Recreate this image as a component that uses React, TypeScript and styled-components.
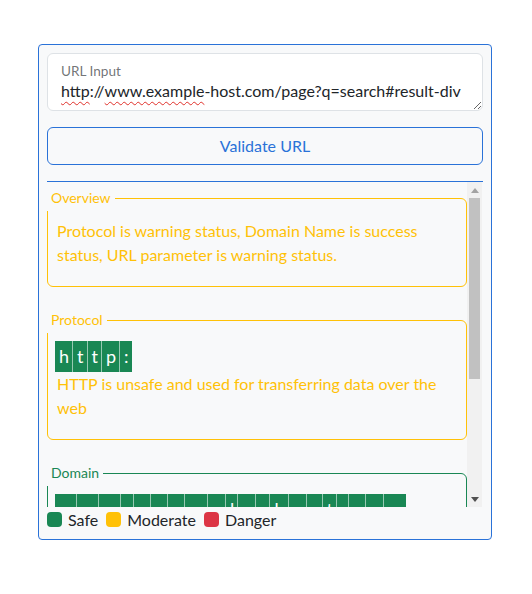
import React from "react";
import styled, { createGlobalStyle } from "styled-components";

const GlobalStyle = createGlobalStyle`
  html, body { margin: 0; padding: 0; background: #ffffff; }
  body {
    font-family: "Lato", "Noto Sans", sans-serif;
    color: #212529;
  }
  * { box-sizing: border-box; }
`;

const BLUE = "#2a72d8";
const GREEN = "#198754";
const YELLOW = "#ffc107";
const RED = "#dc3545";

type Tone = "success" | "warning" | "danger";
const toneColor = (t: Tone) => (t === "success" ? GREEN : t === "warning" ? YELLOW : RED);

const Page = styled.div`
  padding: 44px 0 40px 38px;
`;

const Card = styled.div`
  width: 454px;
  border: 1px solid ${BLUE};
  border-radius: 4px;
  background: #f8f9fa;
  padding: 8px;
  display: flex;
  flex-direction: column;
`;

const FloatingField = styled.div`
  position: relative;
  height: 58px;
  min-height: 58px;
  border: 1px solid #dee2e6;
  border-radius: 6px;
  background: #ffffff;
  resize: vertical;
  overflow: hidden;
  padding: 25px 12px 6px 13px;
`;

const FloatingLabel = styled.label`
  position: absolute;
  top: 8px;
  left: 13px;
  font-size: 13.6px;
  line-height: 18px;
  color: rgba(33, 37, 41, 0.65);
`;

const FieldValue = styled.div`
  font-size: 16px;
  line-height: 24px;
  color: #212529;
  white-space: nowrap;
`;

const Misspelled = styled.span`
  text-decoration: underline wavy #e0302a;
  text-decoration-thickness: 1px;
  text-underline-offset: 4px;
  text-decoration-skip-ink: none;
`;

const OutlineButton = styled.button`
  margin-top: 16px;
  height: 38px;
  border: 1px solid ${BLUE};
  border-radius: 6px;
  background: transparent;
  color: ${BLUE};
  font-family: inherit;
  font-size: 16px;
  line-height: 24px;
  padding: 6px 12px;
  cursor: pointer;
`;

const Divider = styled.div`
  margin-top: 16px;
  height: 1px;
  background: ${BLUE};
`;

const ScrollFrame = styled.div`
  display: flex;
  height: 325px;
`;

const ScrollContent = styled.div`
  flex: 1;
  min-width: 0;
  overflow-y: auto;
  scrollbar-width: none;
  padding: 16px 0 8px 0;
  display: flex;
  flex-direction: column;
  gap: 33px;
  &::-webkit-scrollbar {
    display: none;
  }
`;

const ScrollBar = styled.div`
  flex: none;
  width: 15px;
  margin-right: 1px;
  background: #f1f1f1;
  display: flex;
  flex-direction: column;
`;

const ScrollButton = styled.div`
  flex: none;
  height: 16px;
  display: flex;
  align-items: center;
  justify-content: center;
`;

const ScrollTrack = styled.div`
  flex: 1;
  padding: 0 2px;
`;

const ScrollThumb = styled.div`
  height: 181px;
  background: #c1c1c1;
`;

const Group = styled.div<{ $tone: Tone }>`
  position: relative;
  flex: none;
  border: 1px solid ${(p) => toneColor(p.$tone)};
  border-radius: 6px;
  padding: 20px 8px 19px 7px;
  color: ${(p) => toneColor(p.$tone)};
`;

const GroupLegend = styled.span`
  position: absolute;
  top: -14px;
  left: -1px;
  padding: 0 4px;
  font-size: 14px;
  line-height: 26px;
  background: #f8f9fa;
`;

const GroupText = styled.p`
  margin: 0;
  padding-left: 2px;
  font-size: 16px;
  line-height: 24px;
`;

const CharRow = styled.div`
  display: flex;
  flex-wrap: wrap;
`;

const CharBox = styled.span<{ $tone: Tone }>`
  background: ${(p) => toneColor(p.$tone)};
  color: #ffffff;
  font-size: 18px;
  line-height: 31px;
  padding: 0 3px 0 4px;
  white-space: pre;
  & + & {
    border-left: 1px solid rgba(255, 255, 255, 0.55);
  }
`;

const Legend = styled.div`
  display: flex;
  align-items: center;
  gap: 8px;
  height: 24px;
  font-size: 16px;
`;

const LegendItem = styled.span`
  display: inline-flex;
  align-items: center;
  gap: 6px;
`;

const Swatch = styled.span<{ $tone: Tone }>`
  width: 15px;
  height: 15px;
  border-radius: 4px;
  background: ${(p) => toneColor(p.$tone)};
`;

type Part = { name: string; tone: Tone; chars?: string; charTone?: Tone; text: string };

const parts: Part[] = [
  {
    name: "Overview",
    tone: "warning",
    text: "Protocol is warning status, Domain Name is success status, URL parameter is warning status.",
  },
  {
    name: "Protocol",
    tone: "warning",
    chars: "http:",
    charTone: "success",
    text: "HTTP is unsafe and used for transferring data over the web",
  },
  {
    name: "Domain",
    tone: "success",
    chars: "www.example-host.com",
    charTone: "success",
    text: "Domain name is safe",
  },
  {
    name: "URL Parameter",
    tone: "warning",
    chars: "?q=search",
    charTone: "warning",
    text: "URL contains parameters",
  },
];

export default function App() {
  return (
    <>
      <GlobalStyle />
      <Page>
        <Card>
          <FloatingField role="textbox" aria-label="URL Input">
            <FloatingLabel>URL Input</FloatingLabel>
            <FieldValue>
              <Misspelled>http</Misspelled>://<Misspelled>www.example</Misspelled>-host.com/page?q=search#result-div
            </FieldValue>
          </FloatingField>
          <OutlineButton type="button">Validate URL</OutlineButton>
          <Divider />
          <ScrollFrame>
            <ScrollContent>
              {parts.map((p) => (
                <Group key={p.name} $tone={p.tone}>
                  <GroupLegend>{p.name}</GroupLegend>
                  {p.chars && (
                    <CharRow>
                      {p.chars.split("").map((c, i) => (
                        <CharBox key={i} $tone={p.charTone ?? "success"}>
                          {c}
                        </CharBox>
                      ))}
                    </CharRow>
                  )}
                  <GroupText>{p.text}</GroupText>
                </Group>
              ))}
            </ScrollContent>
            <ScrollBar aria-hidden="true">
              <ScrollButton>
                <svg width="8" height="5" viewBox="0 0 8 5">
                  <polygon points="4,0 8,5 0,5" fill="#a3a3a3" />
                </svg>
              </ScrollButton>
              <ScrollTrack>
                <ScrollThumb />
              </ScrollTrack>
              <ScrollButton>
                <svg width="8" height="5" viewBox="0 0 8 5">
                  <polygon points="0,0 8,0 4,5" fill="#505050" />
                </svg>
              </ScrollButton>
            </ScrollBar>
          </ScrollFrame>
          <Legend>
            <LegendItem>
              <Swatch $tone="success" />
              Safe
            </LegendItem>
            <LegendItem>
              <Swatch $tone="warning" />
              Moderate
            </LegendItem>
            <LegendItem>
              <Swatch $tone="danger" />
              Danger
            </LegendItem>
          </Legend>
        </Card>
      </Page>
    </>
  );
}
